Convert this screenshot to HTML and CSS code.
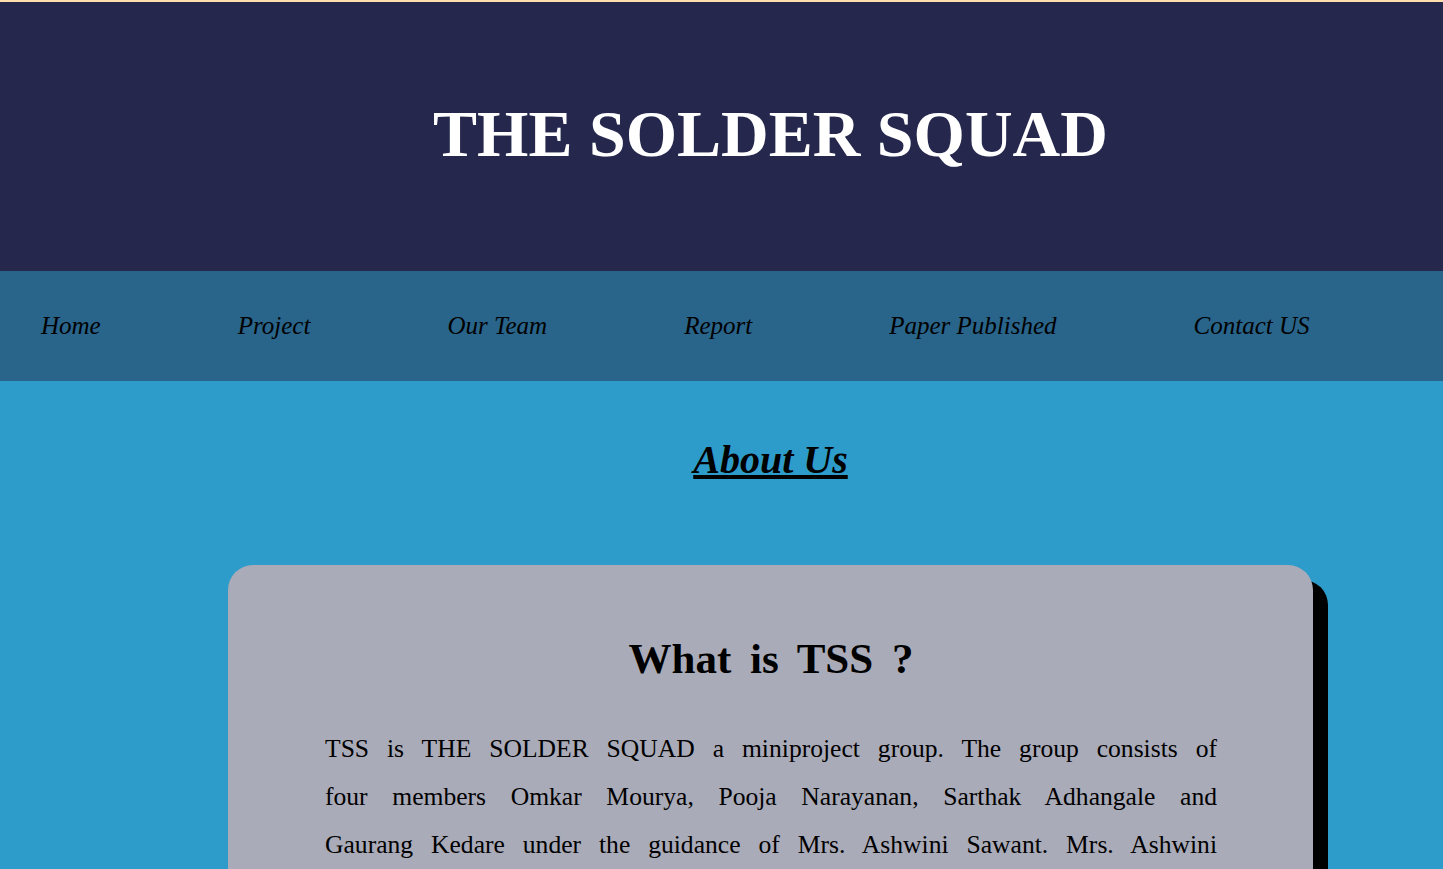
FILE: index.html
```html
<!DOCTYPE html>
<html lang="en">
<head>
<meta charset="utf-8">
<title>The Solder Squad</title>
<link rel="stylesheet" href="styles.css">
</head>
<body>
<header class="site-header">
  <h1 class="site-title">THE SOLDER SQUAD</h1>
</header>
<nav class="site-nav">
  <a href="#" class="nav-link">Home</a>
  <a href="#" class="nav-link">Project</a>
  <a href="#" class="nav-link">Our Team</a>
  <a href="#" class="nav-link">Report</a>
  <a href="#" class="nav-link">Paper Published</a>
  <a href="#" class="nav-link">Contact US</a>
</nav>
<main class="content">
  <h2 class="section-title">About Us</h2>
  <section class="card">
    <h3 class="card-title">What is TSS ?</h3>
    <p class="card-text">TSS is THE SOLDER SQUAD a miniproject group. The group consists of four members Omkar Mourya, Pooja Narayanan, Sarthak Adhangale and Gaurang Kedare under the guidance of Mrs. Ashwini Sawant. Mrs. Ashwini Sawant is an Assistant Professor in the Department of Electronics and Telecommunication Engineering. The group works on building an electronics project and documenting it.</p>
  </section>
</main>
</body>
</html>
```
FILE: styles.css
```css
html, body {
  margin: 0;
  padding: 0;
}
body {
  background: #2e9cca;
  border-top: 2px solid #ffdead;
  font-family: "Liberation Serif", "Times New Roman", serif;
  color: #000;
}
.site-header {
  background: #25274d;
  height: 269px;
  display: flex;
  align-items: center;
  justify-content: center;
  padding-left: 98px;
}
.site-title {
  margin: 0;
  color: #fff;
  font-size: 66px;
  font-weight: bold;
  line-height: 1;
  padding-bottom: 6px;
}
.site-nav {
  background: #29648a;
  height: 110px;
  display: flex;
  align-items: center;
  gap: 137px;
  padding-left: 41px;
}
.nav-link {
  color: #000;
  text-decoration: none;
  font-style: italic;
  font-size: 25px;
}
.content {
  padding: 0 0 40px 98px;
}
.section-title {
  margin: 0;
  padding-top: 56px;
  text-align: center;
  font-size: 40px;
  font-style: italic;
  font-weight: bold;
  text-decoration: underline;
  line-height: 46px;
}
.card {
  width: 1085px;
  box-sizing: border-box;
  margin: 82px auto 0;
  background: #aaabb8;
  border-radius: 25px;
  box-shadow: 15px 15px 0 #000;
  padding: 69px 96px 40px 97px;
  word-spacing: 8px;
}
.card-title {
  margin: 0;
  text-align: center;
  font-size: 43px;
  font-weight: bold;
  line-height: 49px;
}
.card-text {
  margin: 42px 0 0;
  font-size: 25.6px;
  line-height: 48px;
  text-align: justify;
}
```
